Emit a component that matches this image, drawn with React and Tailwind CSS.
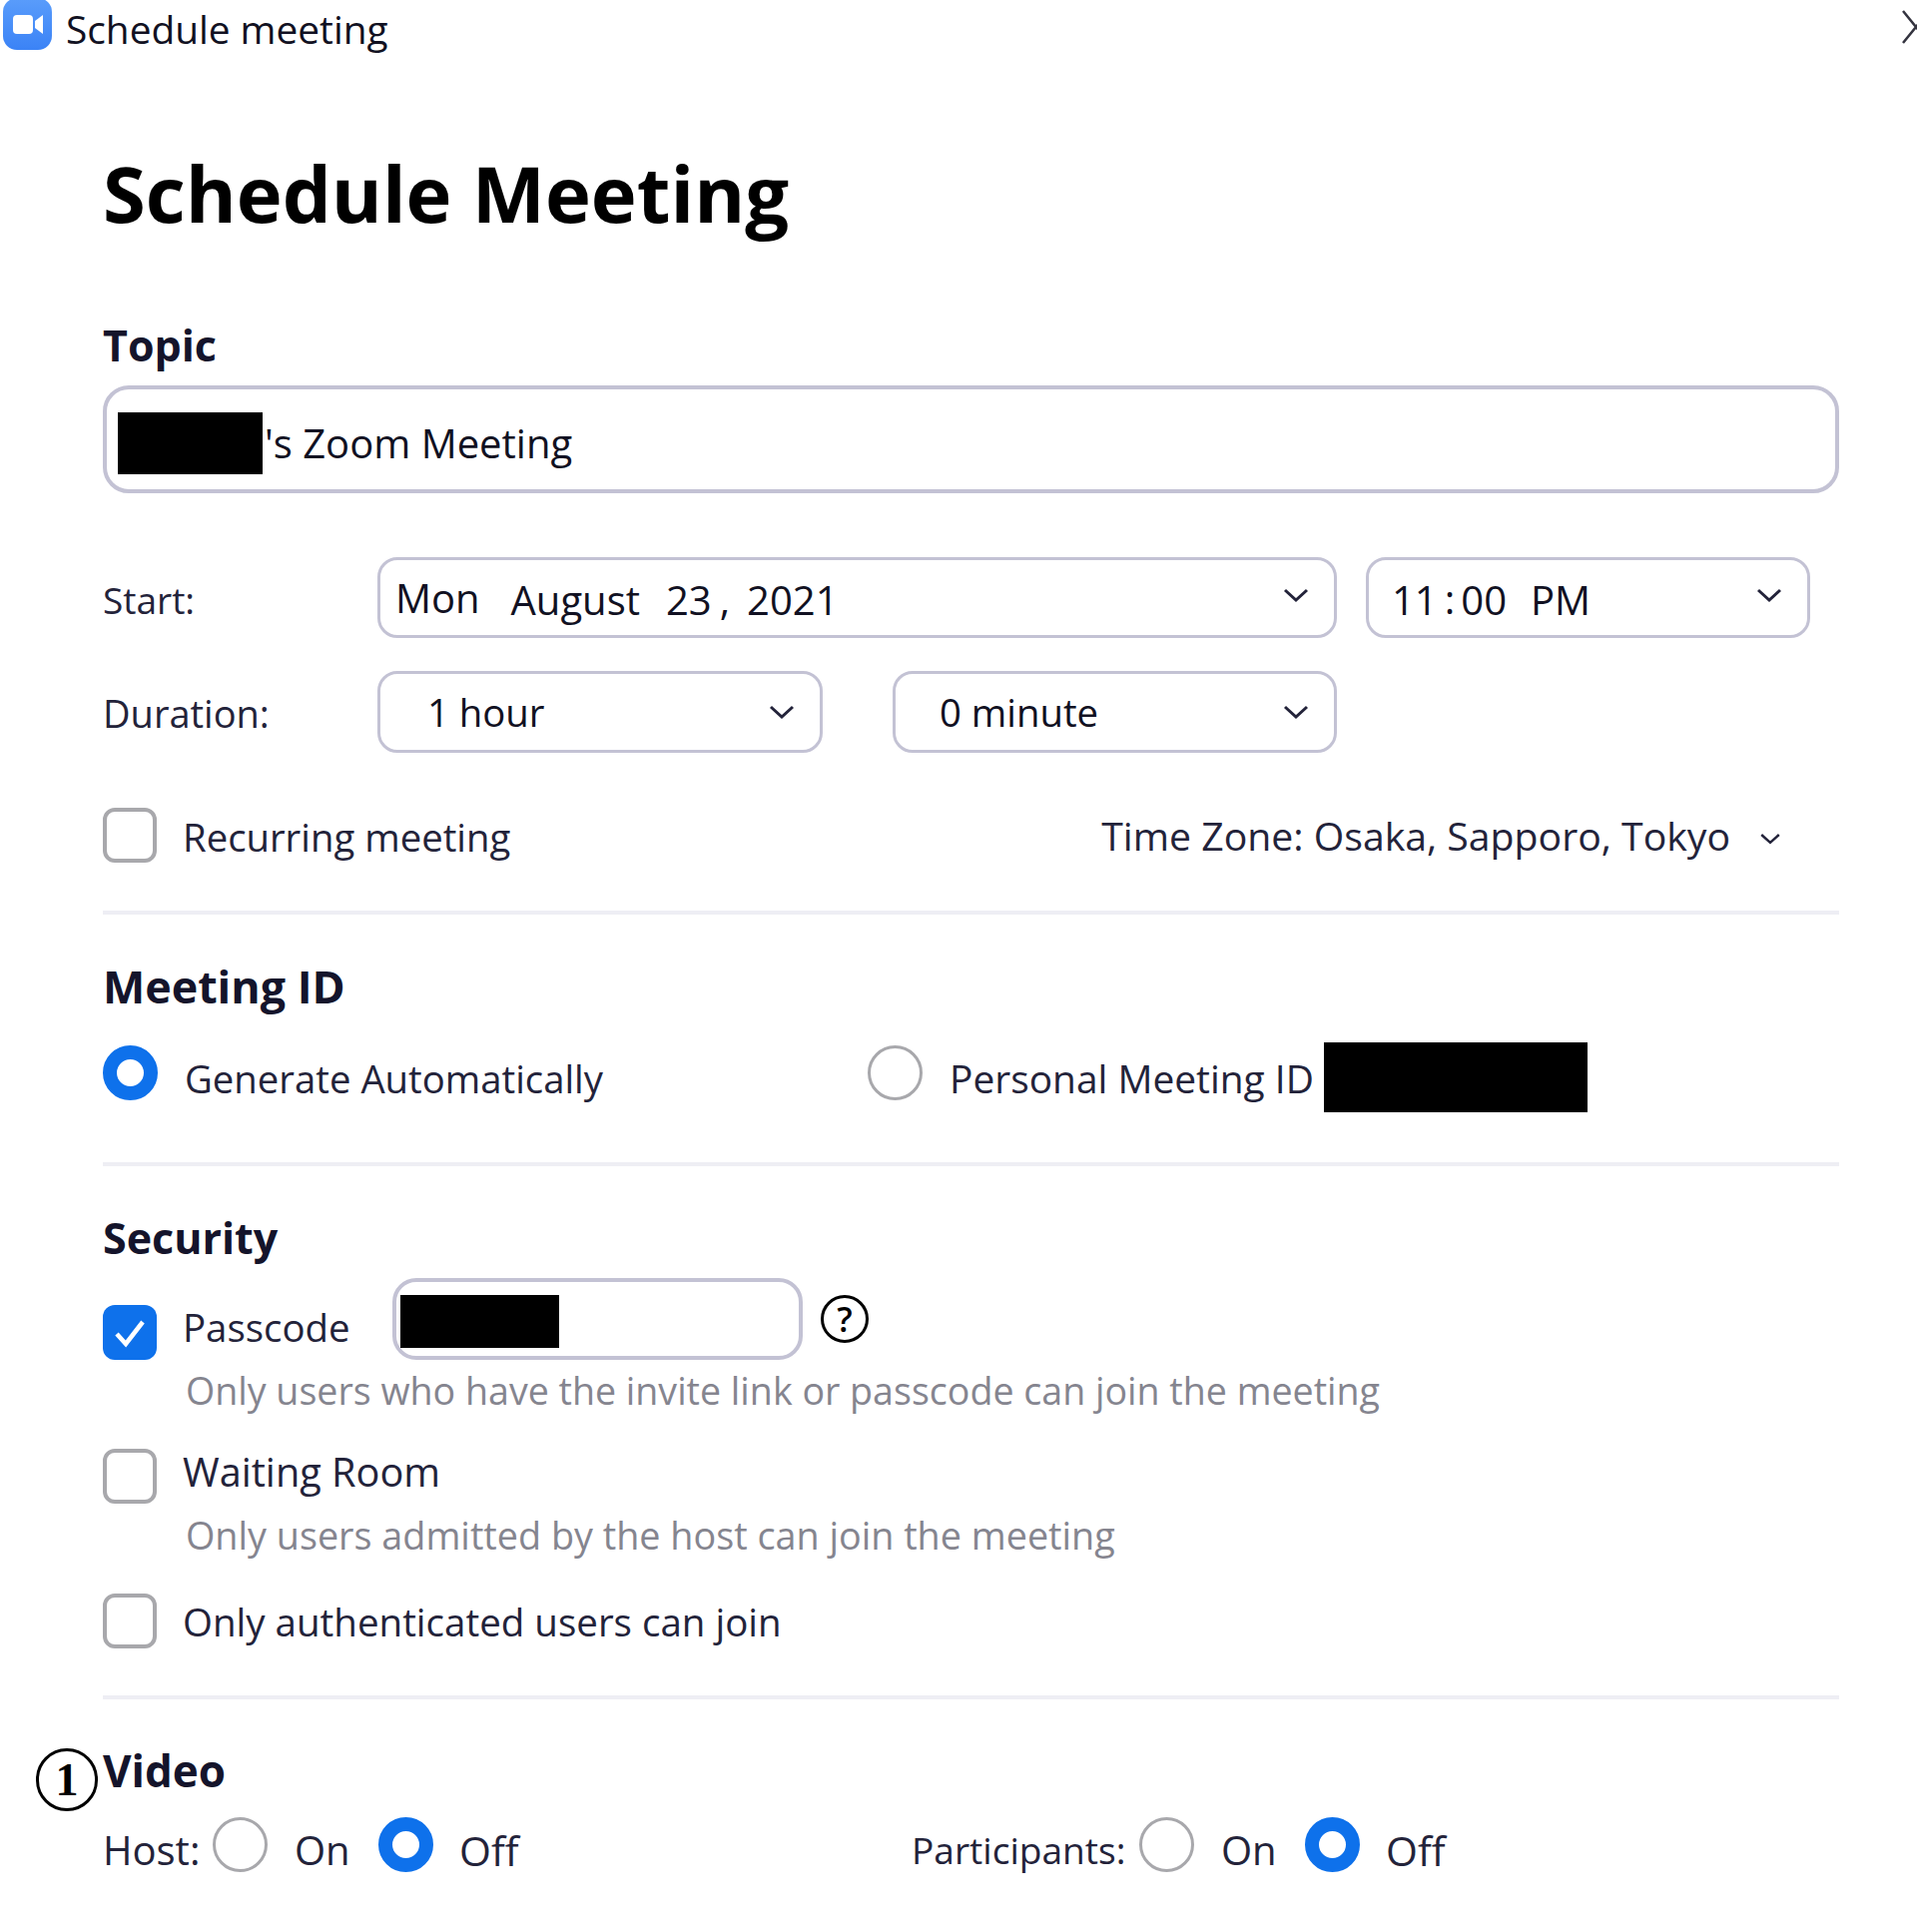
const BODY = "leading-[50px] whitespace-pre";

function Chevron({ className = "" }) {
  return (
    <svg width="26" height="16" viewBox="0 0 26 16" className={className}>
      <path d="M2 3l11 10L24 3" fill="none" stroke="#23233a" strokeWidth="3" />
    </svg>
  );
}

function Check({ checked }) {
  if (checked) {
    return (
      <div className="w-[54px] h-[55px] shrink-0 rounded-[12px] bg-[#0e71eb] flex items-center justify-center">
        <svg width="34" height="30" viewBox="0 0 34 30">
          <path d="M4 16l9 10L30 4" fill="none" stroke="#fff" strokeWidth="4.5" />
        </svg>
      </div>
    );
  }
  return <div className="w-[54px] h-[55px] shrink-0 rounded-[12px] border-[4px] border-[#a8a8ac] bg-white" />;
}

function Radio({ on, className = "" }) {
  return on ? (
    <div className={`w-[55px] h-[55px] shrink-0 rounded-full border-[14px] border-[#0e71eb] bg-white ${className}`} />
  ) : (
    <div className={`w-[55px] h-[55px] shrink-0 rounded-full border-[3.5px] border-[#a8a8ac] bg-white ${className}`} />
  );
}

function Select({ width, pad, chevron = "", children }) {
  return (
    <div className={`${width} ${pad} h-full flex items-center justify-between pr-[25px] rounded-[20px] border-[3px] border-[#c3c2d4] text-[#111122] ${BODY}`}>
      <span className="flex items-center">{children}</span>
      <Chevron className={chevron} />
    </div>
  );
}

function Heading({ children, className = "" }) {
  return <h2 className={`h-[50px] leading-[50px] font-bold text-[#14142b] ${className}`}>{children}</h2>;
}

function Divider({ className = "" }) {
  return <div className={`h-[4px] bg-[#eeeef4] ${className}`} />;
}

export default function App() {
  return (
    <div className="relative w-[1920px] h-[1935px] overflow-hidden bg-white text-[38px] text-[#23233a] font-['Open_Sans',sans-serif]">
      {/* Barra de ventana */}
      <div className="h-[50px] flex items-center justify-between">
        <div className="flex items-center">
          <svg width="52" height="50" viewBox="0 0 52 50" className="ml-[2px]">
            <defs>
              <linearGradient id="zoomBg" x1="0" y1="0" x2="0" y2="1">
                <stop offset="0" stopColor="#5a9dfb" />
                <stop offset="1" stopColor="#3b83f6" />
              </linearGradient>
            </defs>
            <rect x="1" y="-2" width="49" height="52" rx="14" fill="url(#zoomBg)" />
            <rect x="11" y="15" width="20" height="19" rx="4" fill="#fff" />
            <path d="M33 21l8-6v19l-8-6z" fill="#fff" />
          </svg>
          <span className={`ml-[12px] pt-[8px] text-[38.8px] text-[#111122] ${BODY}`}>Schedule meeting</span>
        </div>
        <svg width="30" height="38" viewBox="0 0 30 38" className="mr-[-15px] mt-[6px]">
          <path d="M1 2l26 32M27 2L1 34" fill="none" stroke="#33333f" strokeWidth="2.5" />
        </svg>
      </div>

      <div className="pl-[103px] w-[1842px] box-border">
        <h1 className="mt-[93px] h-[100px] text-[77.7px] leading-[100px] font-bold text-black">Schedule Meeting</h1>

        <Heading className="mt-[78px] text-[43px]">Topic</Heading>
        <div className={`mt-[15px] h-[108px] rounded-[26px] border-[4px] border-[#c3c2d4] flex items-center pl-[11px] text-[40px] text-[#111122] ${BODY}`}>
          <div className="w-[145px] h-[62px] mt-[7px] bg-black" />
          <span className="ml-[2px] mt-[7px]">'s Zoom Meeting</span>
        </div>

        {/* Inicio */}
        <div className="mt-[64px] h-[81px] flex items-center">
          <span className={`w-[275px] pt-[5px] text-[37px] ${BODY}`}>Start:</span>
          <Select width="w-[961px]" pad="pl-[15px]" chevron="mt-[-5px]">
            <span className="text-[40px]">Mon</span>
            <span className="text-[40px] ml-[31px] pt-[5px]">August</span>
            <span className="text-[40px] ml-[26px] pt-[5px]">23</span>
            <span className="text-[40px] ml-[8px] pt-[5px]">,</span>
            <span className="text-[40px] ml-[17px] pt-[5px]">2021</span>
          </Select>
          <div className="w-[29px]" />
          <Select width="w-[445px]" pad="pl-[23px]" chevron="mt-[-5px]">
            <span className="text-[40px] pt-[5px]">11</span>
            <span className="text-[40px] ml-[7px] pt-[2px]">:</span>
            <span className="text-[40px] ml-[6px] pt-[5px]">00</span>
            <span className="text-[40px] ml-[24px] pt-[5px]">PM</span>
          </Select>
        </div>

        {/* Duración */}
        <div className="mt-[33px] h-[82px] flex items-center">
          <span className={`w-[275px] pt-[1px] ${BODY}`}>Duration:</span>
          <Select width="w-[446px]" pad="pl-[47px]"><span className="text-[38.3px]">1 hour</span></Select>
          <div className="w-[70px]" />
          <Select width="w-[445px]" pad="pl-[44px]"><span className="text-[38.3px]">0 minute</span></Select>
        </div>

        <div className={`mt-[55px] h-[55px] flex items-center ${BODY}`}>
          <Check />
          <span className="ml-[26px] text-[38.3px] pt-[2px]">Recurring meeting</span>
          <span className="ml-auto text-[39.2px]">Time Zone: Osaka, Sapporo, Tokyo</span>
          <Chevron className="ml-[27px] mr-[56px] mt-[7px] scale-[0.8]" />
        </div>

        <Divider className="mt-[48px]" />

        <Heading className="mt-[47px] text-[44.8px]">Meeting ID</Heading>
        <div className={`mt-[31px] h-[70px] flex items-center ${BODY}`}>
          <Radio on className="mb-[10px]" />
          <span className="ml-[27px] w-[684px] text-[38.3px] pt-[2px]">Generate Automatically</span>
          <Radio className="mb-[10px]" />
          <span className="ml-[27px] w-[375px] text-[38.9px] pt-[2px]">Personal Meeting ID</span>
          <div className="w-[264px] h-[70px] bg-black" />
        </div>

        <Divider className="mt-[50px]" />

        <Heading className="mt-[47px] text-[43px]">Security</Heading>
        <div className={`mt-[15px] h-[82px] flex items-end ${BODY}`}>
          <Check checked />
          <span className="ml-[26px] w-[210px] mb-[8px] text-[38.4px]">Passcode</span>
          <div className="w-[411px] h-[82px] rounded-[24px] border-[4px] border-[#c3c2d4] pl-[4px] pt-[13px]">
            <div className="w-[159px] h-[53px] bg-black" />
          </div>
          <div className="ml-[18px] mb-[17px] w-[48px] h-[48px] rounded-full border-[3.5px] border-black flex items-center justify-center text-[34px] font-semibold leading-none text-black">?</div>
        </div>
        <p className={`mt-[9px] pl-[83px] h-[44px] text-[37.6px] !leading-[44px] text-[#85858f] ${BODY}`}>Only users who have the invite link or passcode can join the meeting</p>

        <div className={`mt-[36px] h-[55px] flex items-start ${BODY}`}>
          <Check />
          <span className="ml-[26px] mt-[-2px] text-[39.7px]">Waiting Room</span>
        </div>
        <p className={`mt-[10px] pl-[83px] h-[44px] text-[37.75px] !leading-[44px] text-[#85858f] ${BODY}`}>Only users admitted by the host can join the meeting</p>

        <div className={`mt-[36px] h-[55px] flex items-center ${BODY}`}>
          <Check />
          <span className="ml-[26px] text-[38.5px]">Only authenticated users can join</span>
        </div>

        <Divider className="mt-[47px]" />

        <Heading className="mt-[46px] text-[44px]">Video</Heading>
        <div className={`mt-[22px] h-[55px] flex items-center ${BODY}`}>
          <span className="w-[110px] text-[40px] pt-[10px]">Host:</span>
          <Radio />
          <span className="ml-[27px] w-[84px] text-[40px] pt-[10px]">On</span>
          <Radio on />
          <span className="ml-[26px] w-[453px] text-[41px] pt-[10px]">Off</span>
          <span className="w-[228px] text-[37.1px] pt-[10px]">Participants:</span>
          <Radio />
          <span className="ml-[27px] w-[84px] text-[40px] pt-[10px]">On</span>
          <Radio on />
          <span className="ml-[26px] text-[41px] pt-[10px]">Off</span>
        </div>
      </div>

      {/* Número de anotación sobre la captura */}
      <div className="absolute left-[36px] top-[1751px] w-[62px] h-[63px] rounded-full border-[3px] border-black flex items-center justify-center font-['Liberation_Serif',serif] font-bold text-[46px] leading-none text-black">1</div>
    </div>
  );
}
